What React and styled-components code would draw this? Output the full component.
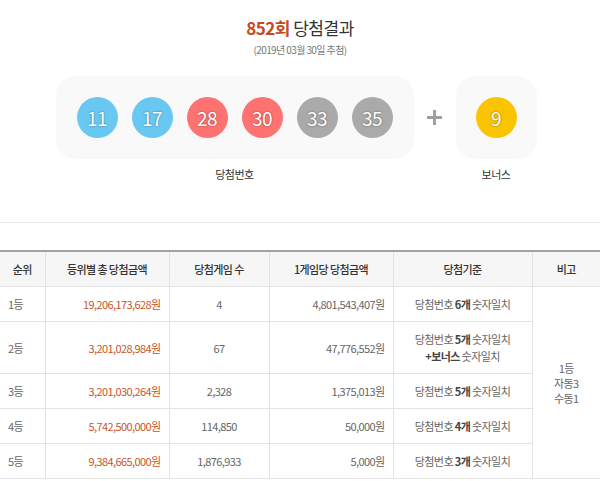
import React from "react";
import styled, { createGlobalStyle } from "styled-components";

const GlobalStyle = createGlobalStyle`
  html, body {
    margin: 0;
    padding: 0;
    background: #fff;
  }
  body {
    font-family: "Noto Sans CJK KR", "Noto Sans", sans-serif;
    color: #666;
  }
`;

const BALL_COLORS = {
  yellow: "#fbc400",
  blue: "#69c8f2",
  red: "#ff7272",
  gray: "#aaaaaa",
};

const colorOf = (n) => {
  if (n <= 10) return "yellow";
  if (n <= 20) return "blue";
  if (n <= 30) return "red";
  return "gray";
};

const Header = styled.header`
  display: flex;
  flex-direction: column;
  align-items: center;
  padding-top: 16px;
`;

const Title = styled.h2`
  margin: 0;
  font-size: 17px;
  line-height: 24px;
  font-weight: normal;
  color: #333;
  letter-spacing: -0.5px;

  strong {
    color: #c8491d;
    font-weight: 600;
  }
`;

const Sub = styled.p`
  margin: 3px 0 0;
  font-size: 10px;
  line-height: 14px;
  color: #777;
  letter-spacing: -0.6px;
`;

const Draw = styled.div`
  display: flex;
  justify-content: center;
  align-items: flex-start;
  margin-top: 19px;
  padding-right: 8px;
`;

const Group = styled.div`
  display: flex;
  flex-direction: column;
  align-items: center;
`;

const Box = styled.div`
  display: flex;
  align-items: center;
  justify-content: center;
  gap: 14px;
  height: 83px;
  padding: 0 ${(p) => (p.$bonus ? 20 : 21)}px;
  background: #f9f9f9;
  border-radius: 20px;
`;

const Ball = styled.span`
  display: flex;
  align-items: center;
  justify-content: center;
  width: 41px;
  height: 41px;
  border-radius: 50%;
  background: ${(p) => BALL_COLORS[p.$color]};
  color: #fff;
  font-size: 19px;
  letter-spacing: -0.5px;
  text-shadow: 0 0 2px rgba(0, 0, 0, 0.5);
`;

const Caption = styled.span`
  margin-top: 7px;
  font-size: 11px;
  line-height: 16px;
  color: #333;
  letter-spacing: -0.5px;
`;

const Plus = styled.div`
  display: flex;
  align-items: center;
  justify-content: center;
  width: 42px;
  height: 83px;
`;

const Divider = styled.hr`
  margin: 40px 0 0;
  border: 0;
  border-top: 1px solid #e8e8e8;
`;

const Table = styled.table`
  width: 100%;
  margin-top: 27px;
  border-collapse: collapse;
  table-layout: fixed;
  border-top: 2px solid #a3a3a3;
  font-size: 11px;
  letter-spacing: -0.6px;
`;

const Th = styled.th`
  height: 34px;
  padding: 0;
  background: #f6f6f6;
  color: #333;
  font-weight: 500;
  border: 1px solid #e2e2e2;
  border-top: 0;

  &:first-child { border-left: 0; }
  &:last-child { border-right: 0; }
`;

const Td = styled.td`
  padding: 9px 8px 8px;
  line-height: 17px;
  color: ${(p) => (p.$accent ? "#c8552a" : "#666")};
  text-align: ${(p) => p.$align || "center"};
  border: 1px solid #e2e2e2;
  vertical-align: middle;
  white-space: nowrap;

  &:first-child { border-left: 0; }
  &:last-child { border-right: 0; }

  b {
    color: #444;
    font-weight: bold;
  }
`;

const Note = styled(Td)`
  line-height: 15px;
  border-right: 0;
`;

const numbers = [11, 17, 28, 30, 33, 35];
const bonus = 9;

const rows = [
  { rank: "1등", total: "19,206,173,628원", count: "4", each: "4,801,543,407원", match: <>당첨번호 <b>6개</b> 숫자일치</> },
  { rank: "2등", total: "3,201,028,984원", count: "67", each: "47,776,552원", match: <>당첨번호 <b>5개</b> 숫자일치<br /><b>+보너스</b> 숫자일치</> },
  { rank: "3등", total: "3,201,030,264원", count: "2,328", each: "1,375,013원", match: <>당첨번호 <b>5개</b> 숫자일치</> },
  { rank: "4등", total: "5,742,500,000원", count: "114,850", each: "50,000원", match: <>당첨번호 <b>4개</b> 숫자일치</> },
  { rank: "5등", total: "9,384,665,000원", count: "1,876,933", each: "5,000원", match: <>당첨번호 <b>3개</b> 숫자일치</> },
];

const PlusIcon = () => (
  <svg width="15" height="15" viewBox="0 0 15 15">
    <path d="M7.5 0v15M0 7.5h15" stroke="#a0a0a0" strokeWidth="3" />
  </svg>
);

export default function App() {
  return (
    <>
      <GlobalStyle />
      <Header>
        <Title>
          <strong>852회</strong> 당첨결과
        </Title>
        <Sub>(2019년 03월 30일 추첨)</Sub>
      </Header>

      <Draw>
        <Group>
          <Box>
            {numbers.map((n) => (
              <Ball key={n} $color={colorOf(n)}>{n}</Ball>
            ))}
          </Box>
          <Caption>당첨번호</Caption>
        </Group>
        <Plus>
          <PlusIcon />
        </Plus>
        <Group>
          <Box $bonus>
            <Ball $color={colorOf(bonus)}>{bonus}</Ball>
          </Box>
          <Caption>보너스</Caption>
        </Group>
      </Draw>

      <Divider />

      <Table>
        <colgroup>
          <col style={{ width: 45 }} />
          <col style={{ width: 124 }} />
          <col style={{ width: 100 }} />
          <col style={{ width: 124 }} />
          <col style={{ width: 139 }} />
          <col />
        </colgroup>
        <thead>
          <tr>
            <Th>순위</Th>
            <Th>등위별 총 당첨금액</Th>
            <Th>당첨게임 수</Th>
            <Th>1게임당 당첨금액</Th>
            <Th>당첨기준</Th>
            <Th>비고</Th>
          </tr>
        </thead>
        <tbody>
          {rows.map((r, i) => (
            <tr key={r.rank}>
              <Td $align="left">{r.rank}</Td>
              <Td $align="right" $accent>{r.total}</Td>
              <Td>{r.count}</Td>
              <Td $align="right">{r.each}</Td>
              <Td>{r.match}</Td>
              {i === 0 && (
                <Note rowSpan={5}>
                  1등<br />자동3<br />수동1
                </Note>
              )}
            </tr>
          ))}
        </tbody>
      </Table>
    </>
  );
}
